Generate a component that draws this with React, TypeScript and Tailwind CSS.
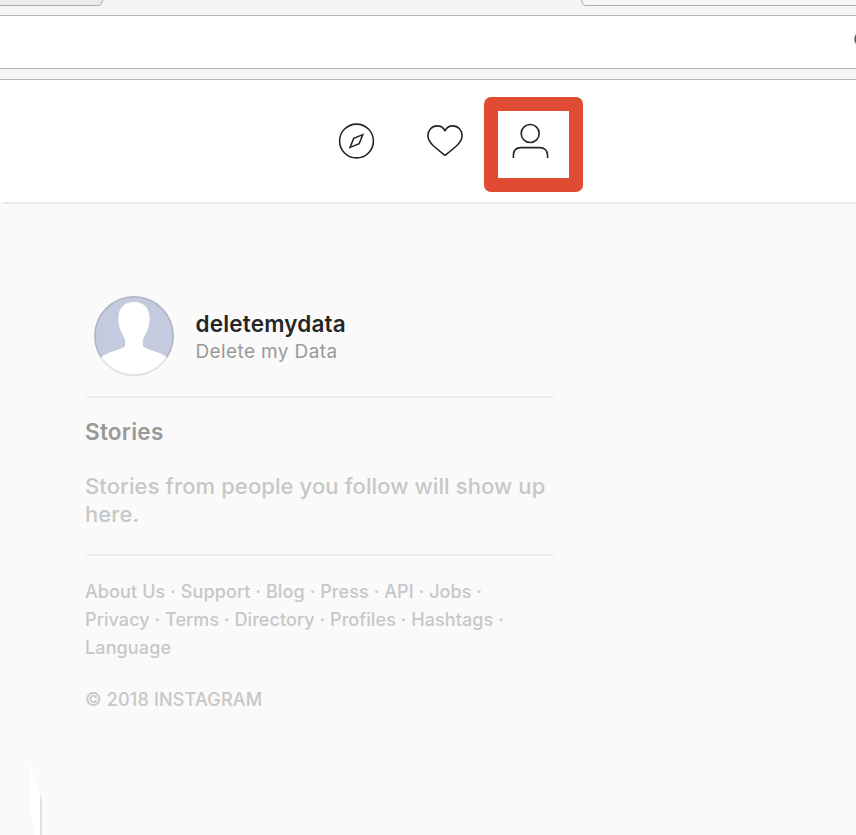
const CompassIcon = () => (
  <svg className="mt-[42px] h-[38px] w-[38px] shrink-0" viewBox="0 0 38 38" fill="none" stroke="#262626">
    <circle cx="18.5" cy="19" r="16.9" strokeWidth="1.6" />
    <path d="M24.8 12.6 15.7 16.4 12 25.4 21.2 21.6Z" strokeWidth="1.5" />
  </svg>
);

const HeartIcon = () => (
  <svg className="ml-[50px] mt-[42px] h-[38px] w-[38px] shrink-0" viewBox="0 0 38 38" fill="none" stroke="#262626" strokeWidth="1.6" strokeLinejoin="round">
    <path d="M19 8.8C17.4 5.7 14.5 3.9 11.2 3.9C5.8 3.9 1.9 8.1 1.9 13.8C1.9 18.2 4 20.7 7.6 24L17.6 32.4C18.5 33.3 19.5 33.3 20.4 32.4L30.4 24C34 20.7 36.1 18.2 36.1 13.8C36.1 8.1 32.2 3.9 26.8 3.9C23.5 3.9 20.6 5.7 19 8.8Z" />
  </svg>
);

const PersonIcon = () => (
  <svg className="h-[67px] w-[71px]" viewBox="0 0 71 67" fill="none" stroke="#262626" strokeWidth="1.6">
    <circle cx="32.2" cy="22.5" r="9" />
    <path d="M15.4 47V44.5C15.4 39.5 18.2 36.6 23 36.6H41.5C46.3 36.6 49.6 39.5 49.6 44.5V47" />
  </svg>
);

const Avatar = () => (
  <svg className="ml-2 h-20 w-20 shrink-0" viewBox="0 0 80 80">
    <defs>
      <clipPath id="avatar">
        <circle cx="40" cy="40" r="40" />
      </clipPath>
    </defs>
    <g clipPath="url(#avatar)">
      <rect width="80" height="80" fill="#c5cbdf" />
      <path d="M40 6C30 6 24.4 12.5 24.4 22C24.4 31 27 36 30 41C31.5 44 31.3 46 31 50C28 54 14 55 6 62V80H74V62C66 55 52 54 49 50C48.7 46 48.5 44 50 41C53 36 55.6 31 55.6 22C55.6 12.5 50 6 40 6Z" fill="white" />
    </g>
    <circle cx="40" cy="40" r="39.1" fill="none" stroke="#000" strokeOpacity="0.1" strokeWidth="1.8" />
  </svg>
);

const Chrome = () => (
  <div className="bg-[#f5f5f5]">
    <div className="flex h-[15px] items-start justify-between">
      <svg className="h-[7px] w-[110px]" viewBox="0 0 110 7">
        <path d="M0 0H103L101 4Q100.3 5.5 98.5 5.5H0Z" fill="#ebebeb" />
        <path d="M103 0L101 4Q100.3 5.5 98.5 5.5H0" fill="none" stroke="#adadad" />
      </svg>
      <svg className="h-[7px] w-[276px]" viewBox="0 0 276 7">
        <path d="M1.3 0L3 4Q3.6 5.5 5.5 5.5H276" fill="none" stroke="#adadad" />
      </svg>
    </div>
    <div className="flex h-[54px] items-start justify-end overflow-hidden border-y border-[#b5b5b5] bg-white">
      <svg className="mt-[16px] h-[14px] w-[3px]" viewBox="0 0 3 14">
        <circle cx="8.7" cy="7" r="6.5" fill="none" stroke="#626262" strokeWidth="2" />
      </svg>
    </div>
    <div className="h-[11px] border-b border-[#b5b5b5]" />
  </div>
);

const footerLines = [
  { text: "About Us · Support · Blog · Press · API · Jobs ·", style: "tracking-[0.11px]" },
  { text: "Privacy · Terms · Directory · Profiles · Hashtags ·", style: "tracking-[0.08px]" },
  { text: "Language", style: "tracking-[0.12px]" },
];

export default function App() {
  return (
    <div className="relative flex h-[835px] w-[856px] flex-col overflow-hidden bg-[#fafafa] font-['Inter','Liberation_Sans',sans-serif]">
      <Chrome />
      <header className="h-[122px] bg-white">
        <nav className="flex items-start pl-[338px]">
          <CompassIcon />
          <HeartIcon />
          <a className="ml-5 mt-[17px] h-[95px] w-[99px] shrink-0 rounded-[7px] bg-[#e04b34] pl-[13.5px] pt-[14px]">
            <div className="h-[67px] w-[71.5px] bg-white">
              <PersonIcon />
            </div>
          </a>
        </nav>
      </header>
      <div className="ml-[3px] h-[2px] shrink-0 bg-[#e9e9e9]" />
      <aside className="ml-[86px] mt-[92px] w-[468px] whitespace-nowrap">
        <section className="flex h-[102px] items-start border-b-2 border-[#eeeeee]">
          <Avatar />
          <div className="ml-[21.5px] pt-[14px]">
            <p className="text-[22.5px] font-semibold leading-7 tracking-[0.18px] text-[#262626]">deletemydata</p>
            <p className="text-[19px] leading-7 tracking-[0.38px] text-[#999999]">Delete my Data</p>
          </div>
        </section>
        <section className="-ml-px h-[158px] w-[469px] pt-5">
          <h2 className="text-[22.5px] font-semibold leading-7 tracking-[0.25px] text-[#999999]">Stories</h2>
          <p className="mt-[26px] text-[22px] font-medium leading-7 tracking-[0.1px] text-[#c7c7c7]">Stories from people you follow will show up<br />here.</p>
        </section>
        <div className="-mt-[2px] h-[2px] bg-[#eeeeee]" />
        <footer className="-ml-px pt-[22px] text-[18px] font-medium leading-7 text-[#c7c7c7]">
          {footerLines.map((line) => (
            <p key={line.text} className={line.style}>{line.text}</p>
          ))}
          <p className="mt-6 tracking-[0.19px]">© 2018 INSTAGRAM</p>
        </footer>
      </aside>
      <svg className="absolute left-[26px] top-[755px] h-20 w-5" viewBox="0 0 20 80">
        <path d="M3 5L15 44V80H8L3 42Z" fill="white" />
        <path d="M14 39L16 45V80H14Z" fill="#e3e3e3" />
      </svg>
    </div>
  );
}
